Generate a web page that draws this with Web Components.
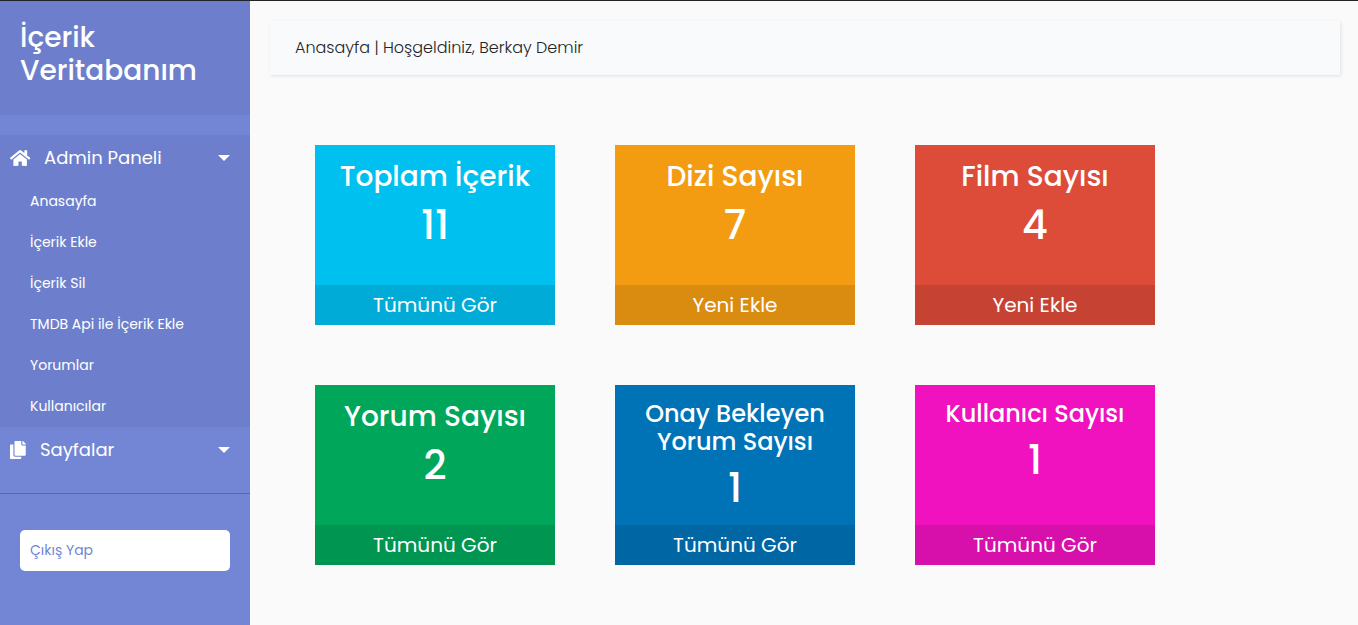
<!DOCTYPE html>
<html lang="tr">
<head>
<meta charset="utf-8">
<meta name="viewport" content="width=device-width, initial-scale=1">
<title>İçerik Veritabanım</title>
<style>
  body { margin: 0; background: #fafafa; color: #212529; font-family: Poppins, Inter, "Open Sans", sans-serif; font-size: 16px; line-height: 24px; }
</style>
</head>
<body>
<admin-layout>
  <side-bar slot="sidebar" heading="İçerik Veritabanım">
    <menu-group label="Admin Paneli" icon="home" open>
      <menu-entry>Anasayfa</menu-entry>
      <menu-entry>İçerik Ekle</menu-entry>
      <menu-entry>İçerik Sil</menu-entry>
      <menu-entry>TMDB Api ile İçerik Ekle</menu-entry>
      <menu-entry>Yorumlar</menu-entry>
      <menu-entry>Kullanıcılar</menu-entry>
    </menu-group>
    <menu-group label="Sayfalar" icon="copy"></menu-group>
    <logout-link slot="footer">Çıkış Yap</logout-link>
  </side-bar>
  <welcome-bar>Anasayfa | Hoşgeldiniz, Berkay Demir</welcome-bar>
  <card-list>
    <stat-card heading="Toplam İçerik" value="11" action="Tümünü Gör" style="--card: #00c0ef; --foot: #00acd7"></stat-card>
    <stat-card heading="Dizi Sayısı" value="7" action="Yeni Ekle" style="--card: #f39c12; --foot: #da8c10"></stat-card>
    <stat-card heading="Film Sayısı" value="4" action="Yeni Ekle" style="--card: #dd4b39; --foot: #c64333"></stat-card>
    <stat-card heading="Yorum Sayısı" value="2" action="Tümünü Gör" style="--card: #00a65a; --foot: #009551"></stat-card>
    <stat-card compact heading="Onay Bekleyen Yorum Sayısı" value="1" action="Tümünü Gör" style="--card: #0073b7; --foot: #0067a4"></stat-card>
    <stat-card compact heading="Kullanıcı Sayısı" value="1" action="Tümünü Gör" style="--card: #f012be; --foot: #d810ab"></stat-card>
  </card-list>
</admin-layout>

<script>
const ICONS = {
  home: '<svg width="21" height="18" viewBox="0 0 576 512" preserveAspectRatio="xMinYMid" aria-hidden="true"><path fill="currentColor" d="M280.37 148.26L96 300.11V464a16 16 0 0 0 16 16l112.06-.29a16 16 0 0 0 15.92-16V368a16 16 0 0 1 16-16h64a16 16 0 0 1 16 16v95.64a16 16 0 0 0 16 16.05L464 480a16 16 0 0 0 16-16V300L295.67 148.26a12.19 12.19 0 0 0-15.3 0zM571.6 251.47L488 182.56V44.05a12 12 0 0 0-12-12h-56a12 12 0 0 0-12 12v72.61L318.47 43a48 48 0 0 0-61 0L4.34 251.47a12 12 0 0 0-1.6 16.9l25.5 31A12 12 0 0 0 45.15 301l235.22-193.74a12.19 12.19 0 0 1 15.3 0L530.9 301a12 12 0 0 0 16.9-1.6l25.5-31a12 12 0 0 0-1.7-16.93z"/></svg>',
  copy: '<svg width="17" height="18" viewBox="0 0 448 512" preserveAspectRatio="xMinYMid" aria-hidden="true"><path fill="currentColor" d="M320 448v40c0 13.255-10.745 24-24 24H24c-13.255 0-24-10.745-24-24V120c0-13.255 10.745-24 24-24h72v296c0 30.879 25.121 56 56 56h168zm0-344V0H152c-13.255 0-24 10.745-24 24v368c0 13.255 10.745 24 24 24h272c13.255 0 24-10.745 24-24V128H344c-13.2 0-24-10.8-24-24zm120.971-31.029L375.029 7.029A24 24 0 0 0 358.059 0H352v96h96v-6.059a24 24 0 0 0-7.029-16.97z"/></svg>'
};

function define(name, render) {
  customElements.define(name, class extends HTMLElement {
    connectedCallback() {
      if (this.shadowRoot) return;
      this.attachShadow({ mode: "open" }).innerHTML = render(this);
      const toggle = this.shadowRoot.querySelector("button");
      if (toggle) toggle.addEventListener("click", () => {
        toggle.setAttribute("aria-expanded", String(this.toggleAttribute("open")));
      });
    }
  });
}

define("admin-layout", () => `
  <style>
    :host { display: flex; min-height: 100vh; box-sizing: border-box; border-top: 1px solid #212529; }
    main { flex: 1; min-width: 0; padding: 20px 18px 20px 20px; }
  </style>
  <slot name="sidebar"></slot>
  <main><slot></slot></main>`);

define("side-bar", el => `
  <style>
    :host { display: block; flex: 0 0 250px; background: #7386d5; color: #fff; }
    header { padding: 20px 20px 28px; background: #6d7fcc; }
    h3 { margin: 0; font-size: 28px; line-height: 33px; font-weight: 500; }
    nav { padding: 20px 0; border-bottom: 1px solid #47748b; }
    footer { padding: 36px 20px 20px; }
  </style>
  <header><h3>${el.getAttribute("heading")}</h3></header>
  <nav><slot></slot></nav>
  <footer><slot name="footer"></slot></footer>`);

define("menu-group", el => `
  <style>
    :host { display: block; }
    :host([open]) { background: #6d7fcc; }
    button { display: flex; align-items: center; gap: 13px; width: 100%; padding: 10px 20px 10px 10px; border: 0; background: none; color: inherit; font: inherit; font-size: 18px; line-height: 26px; text-align: left; cursor: pointer; }
    span { flex: 1; }
    button::after { content: ""; border: 6px solid transparent; border-top: 6px solid currentColor; border-bottom: 0; }
    div { display: none; }
    :host([open]) div { display: block; }
  </style>
  <button type="button" aria-expanded="${el.hasAttribute("open")}">${ICONS[el.getAttribute("icon")]}<span>${el.getAttribute("label")}</span></button>
  <div><slot></slot></div>`);

define("menu-entry", () => `
  <style>
    :host { display: block; }
    a { display: block; padding: 10px 30px; color: inherit; font-size: 14px; line-height: 21px; text-decoration: none; }
  </style>
  <a href="#"><slot></slot></a>`);

define("logout-link", () => `
  <style>
    :host { display: block; }
    a { display: block; padding: 10px; border-radius: 5px; background: #fff; color: #7386d5; font-size: 14px; line-height: 21px; text-decoration: none; }
  </style>
  <a href="#"><slot></slot></a>`);

define("welcome-bar", () => `
  <style>
    :host { display: block; padding: 15px 25px; background: #f8fafc; box-shadow: 1px 1px 3px rgba(0, 0, 0, .1); font-weight: 300; }
  </style>
  <slot></slot>`);

define("card-list", () => `
  <style>
    :host { display: flex; flex-wrap: wrap; gap: 60px; padding: 70px 45px 0; }
  </style>
  <slot></slot>`);

define("stat-card", el => `
  <style>
    :host { display: flex; flex-direction: column; width: 240px; min-height: 180px; background: var(--card); color: #fff; text-align: center; }
    section { flex: 1; padding: 15px 15px 0; }
    h3 { margin: 0 0 8px; font-size: 28px; line-height: 33px; font-weight: 500; }
    :host([compact]) h3 { font-size: 24px; line-height: 28px; }
    p { margin: 0; font-size: 40px; line-height: 48px; font-weight: 500; }
    a { display: block; background: var(--foot); color: inherit; font-size: 20px; line-height: 40px; text-decoration: none; }
  </style>
  <section><h3>${el.getAttribute("heading")}</h3><p>${el.getAttribute("value")}</p></section>
  <a href="#">${el.getAttribute("action")}</a>`);
</script>
</body>
</html>
